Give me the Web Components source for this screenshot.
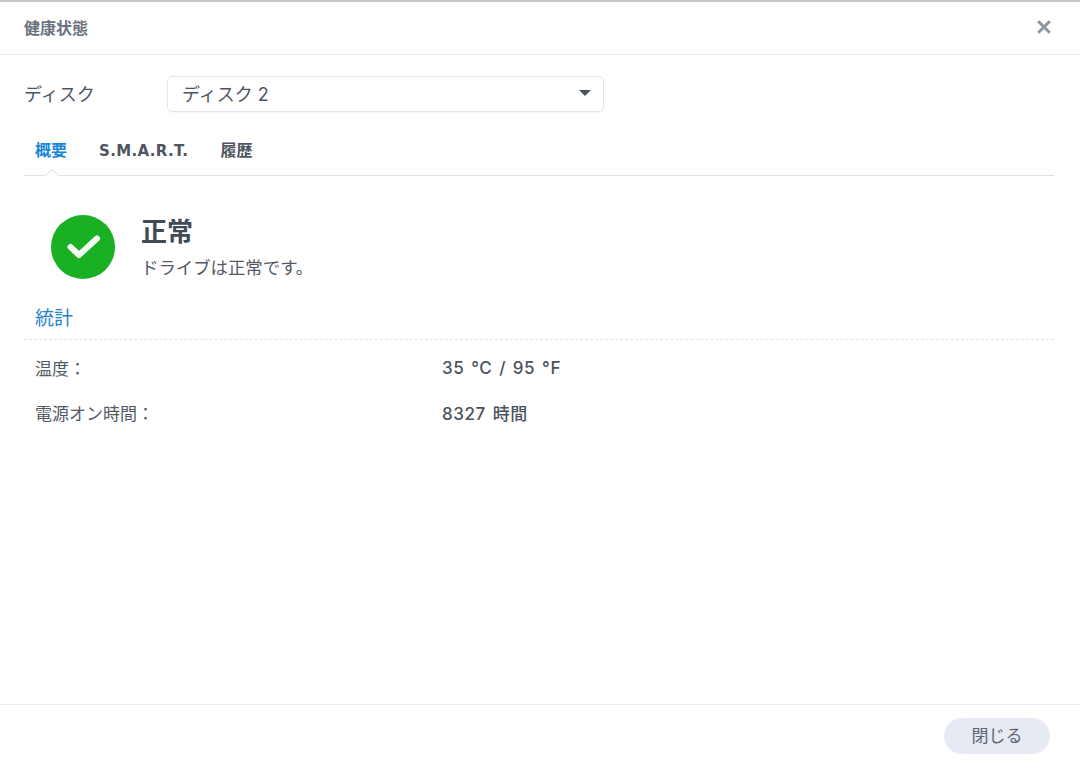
<!DOCTYPE html>
<html lang="ja"><head><meta charset="utf-8">
<style>
html,body{margin:0;padding:0;background:#fff;height:100%}
body{font-family:"Inter","Noto Sans CJK JP",sans-serif;color:#414b55;overflow:hidden}
</style></head><body>
<health-dialog>
  <dialog-header slot="header">健康状態</dialog-header>
  <disk-select label="ディスク" value="ディスク 2"></disk-select>
  <tab-bar></tab-bar>
  <status-panel heading="正常" text="ドライブは正常です。"></status-panel>
  <section-title>統計</section-title>
  <stat-row label="温度：" value="35 °C / 95 °F" style="margin-top:5px"></stat-row>
  <stat-row label="電源オン時間：" value="8327 時間"></stat-row>
  <dialog-footer slot="footer">閉じる</dialog-footer>
</health-dialog>
<script>
function def(name, html){
  customElements.define(name, class extends HTMLElement{
    connectedCallback(){
      if(this.shadowRoot) return;
      const r=this.attachShadow({mode:'open'});
      r.innerHTML=typeof html==='function'?html(this):html;
    }
  });
}
def('health-dialog',`<style>
:host{display:flex;flex-direction:column;height:763px;box-sizing:border-box;border-top:2px solid #c9c9c9;background:#fff}
.body{flex:1;padding:0 26px 0 24px;display:flex;flex-direction:column;min-height:0}
</style><slot name="header"></slot><div class="body"><slot></slot></div><slot name="footer"></slot>`);
def('dialog-header',`<style>
:host{display:flex;align-items:center;justify-content:space-between;height:53px;box-sizing:border-box;border-bottom:1px solid #e8eaed;padding:0 27px 3px 24px;font-size:16px;font-weight:700;color:#6a737d}
svg{display:block;margin-top:1px}
</style><span><slot></slot></span><svg width="18" height="18" viewBox="0 0 18 18"><path d="M3.2 3.2 14.8 14.8M14.8 3.2 3.2 14.8" stroke="#8d95a0" stroke-width="3" fill="none"/></svg>`);
def('disk-select',h=>`<style>
:host{display:flex;align-items:center;margin-top:21px;height:36px;font-size:18px;color:#4c555f;line-height:34px}
.l{width:143px;flex:none;padding-top:2px}
.b{width:437px;height:36px;box-sizing:border-box;border:1px solid #e2e5ea;border-radius:5px;display:flex;align-items:center;justify-content:space-between;padding:0 12px 0 14px;box-shadow:0 1px 1px rgba(0,0,0,.03)}
.t{padding-top:1px}
.a{width:0;height:0;border:6.5px solid transparent;border-top:6px solid #4a525c;border-bottom:0;margin-top:-2px}
</style><span class="l">${h.getAttribute('label')}</span><div class="b"><span class="t">${h.getAttribute('value')}</span><span class="a"></span></div>`);
def('tab-bar',`<style>
:host{display:flex;align-items:center;margin-top:20px;height:44px;box-sizing:border-box;border-bottom:1px solid #dfe2e6;position:relative;font-size:16px;font-weight:700;color:#4d5660;padding-left:11px;gap:32px;padding-bottom:9px}
.on{color:#1a86d8}
.s{font-family:"DejaVu Sans";font-size:15px;letter-spacing:.35px;margin-top:3px}
.n{position:absolute;left:20px;bottom:-1px;width:14px;height:7px;overflow:hidden}
.n:before{content:"";position:absolute;left:2px;top:2px;width:10px;height:10px;background:#fff;border:1px solid #dfe2e6;transform:rotate(45deg)}
</style><span class="on">概要</span><span class="s">S.M.A.R.T.</span><span>履歴</span><i class="n"></i>`);
def('status-panel',h=>`<style>
:host{display:flex;margin-top:39px;padding-left:27px;height:64px;gap:26px;color:#414b55}
svg{display:block;flex:none}
h2{margin:0;font-size:26px;line-height:36px;font-weight:700}
p{margin:0;font-size:17.4px;line-height:24px;margin-top:6px;color:#525b65}
</style><svg width="64" height="64" viewBox="0 0 64 64"><circle cx="32" cy="32" r="32" fill="#19b024"/><path d="M19.5 32 28 40 46 23.5" fill="none" stroke="#fff" stroke-width="6" stroke-linecap="round" stroke-linejoin="round" stroke-opacity=".95"/></svg><div style="margin-top:-1px"><h2>${h.getAttribute('heading')}</h2><p>${h.getAttribute('text')}</p></div>`);
def('section-title',`<style>
:host{display:flex;align-items:center;margin-top:21px;height:40px;box-sizing:border-box;border-bottom:1px dashed #e0e3e6;padding-left:11px;padding-bottom:7px;font-size:19px;color:#1e83c9}
</style><slot></slot>`);
def('stat-row',h=>`<style>
:host{display:flex;align-items:center;height:45px;padding-left:11px;font-size:17px;color:#525b65}
.l{width:407px;flex:none}
.v{font-weight:500;color:#4a535d;letter-spacing:.55px;word-spacing:1.8px}
</style><span class="l">${h.getAttribute('label')}</span><span class="v">${h.getAttribute('value')}</span>`);
def('dialog-footer',`<style>
:host{display:flex;justify-content:flex-end;align-items:flex-start;height:59px;box-sizing:border-box;border-top:1px solid #e8eaed;padding:13px 30px 0 0}
button{all:unset;width:106px;height:36px;border-radius:18px;background:#e6eaf3;text-align:center;font:400 17px "Inter","Noto Sans CJK JP",sans-serif;line-height:36px;color:#5c6570}
</style><button><slot></slot></button>`);
</script>
</body></html>
